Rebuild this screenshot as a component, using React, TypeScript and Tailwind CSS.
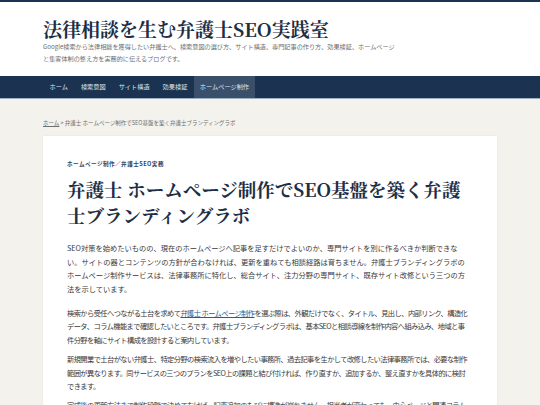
import React from "react";

const sans = { fontFamily: '"Noto Sans CJK JP", "Noto Sans", sans-serif' };
const serif = {
  fontFamily: '"Noto Serif CJK JP", "Liberation Serif", "Noto Sans CJK JP", serif',
};

const navItems = ["ホーム", "検索意図", "サイト構造", "効果検証", "ホームページ制作"];

export default function App() {
  return (
    <div className="h-[405px] w-full overflow-hidden bg-[#f4f2ec]" style={sans}>
      <div className="h-[2px] bg-[#1b3350]" />

      {/* Site header */}
      <header className="bg-white">
        <div className="mx-auto w-[454px] pb-[11px] pt-[14px]">
          <h1
            className="text-[19px] font-bold leading-[26px] text-[#1d2e45]"
            style={serif}
          >
            法律相談を生む弁護士SEO実践室
          </h1>
          <p className="mt-[-1px] max-w-[356px] text-[6.15px] leading-[12px] text-[#6b6f75]">
            Google検索から法律相談を獲得したい弁護士へ、検索意図の選び方、サイト構造、専門記事の作り方、効果検証、ホームページと集客体制の整え方を実務的に伝えるブログです。
          </p>
        </div>
      </header>

      {/* Global nav */}
      <nav className="border-b border-[#9fb0c2] bg-[#1b3350]">
        <ul className="mx-auto flex h-[22px] w-[454px] items-stretch">
          {navItems.map((item, i) => (
            <li
              key={item}
              className={
                i === navItems.length - 1
                  ? "flex items-center bg-[#3a506a] px-[6px] text-[6.2px] text-[#dfe5ec]"
                  : "flex items-center px-[6.5px] text-[6.2px] text-[#dfe5ec]"
              }
            >
              {item}
            </li>
          ))}
        </ul>
      </nav>

      <main className="mx-auto w-[454px] pt-[19px]">
        {/* Breadcrumb */}
        <div className="text-[5.5px] leading-[10px] text-[#6f6f6f]">
          <span className="underline">ホーム</span>
          <span> &gt; 弁護士 ホームページ制作でSEO基盤を築く弁護士ブランディングラボ</span>
        </div>

        {/* Article card */}
        <article className="mt-[8px] bg-white px-[24px] pb-[20px] pt-[24px] shadow-[0_0_2px_rgba(0,0,0,0.07)]">
          <div className="text-[5.6px] font-bold leading-[8px] tracking-[0.45px] text-[#2c4563]">
            ホームページ制作／弁護士SEO実務
          </div>
          <h2
            className="mt-[8px] w-[404px] text-[18.5px] font-bold leading-[26px] text-[#1d2e45]"
            style={serif}
          >
            弁護士 ホームページ制作でSEO基盤を築く弁護士ブランディングラボ
          </h2>

          <div className="mt-[14px] w-[404px] text-[7.25px] leading-[13.6px] text-[#383838]">
            <p className="mb-[10.5px]">
              SEO対策を始めたいものの、現在のホームページへ記事を足すだけでよいのか、専門サイトを別に作るべきか判断できない。サイトの器とコンテンツの方針が合わなければ、更新を重ねても相談経路は育ちません。弁護士ブランディングラボのホームページ制作サービスは、法律事務所に特化し、総合サイト、注力分野の専門サイト、既存サイト改修という三つの方法を示しています。
            </p>
            <p className="mb-[5.5px] tracking-[-0.58px]">
              検索から受任へつながる土台を求めて
              <span className="text-[#2d5d8c] underline">弁護士 ホームページ制作</span>
              を選ぶ際は、外観だけでなく、タイトル、見出し、内部リンク、構造化データ、コラム機能まで確認したいところです。弁護士ブランディングラボは、基本SEOと相談導線を制作内容へ組み込み、地域と事件分野を軸にサイト構成を設計すると案内しています。
            </p>
            <p className="mb-[5.5px] tracking-[-0.58px]">
              新規開業で土台がない弁護士、特定分野の検索流入を増やしたい事務所、過去記事を生かして改修したい法律事務所では、必要な制作範囲が異なります。同サービスの三つのプランをSEO上の課題と結び付ければ、作り直すか、追加するか、整え直すかを具体的に検討できます。
            </p>
            <p className="tracking-[-0.58px]">
              完成後の更新方法まで制作段階で決めておけば、記事追加のたびに構造が崩れません。担当者が変わっても、中心ページと関連コラムの役割を保ったまま運用を続けられます。
            </p>
          </div>
        </article>
      </main>
    </div>
  );
}
